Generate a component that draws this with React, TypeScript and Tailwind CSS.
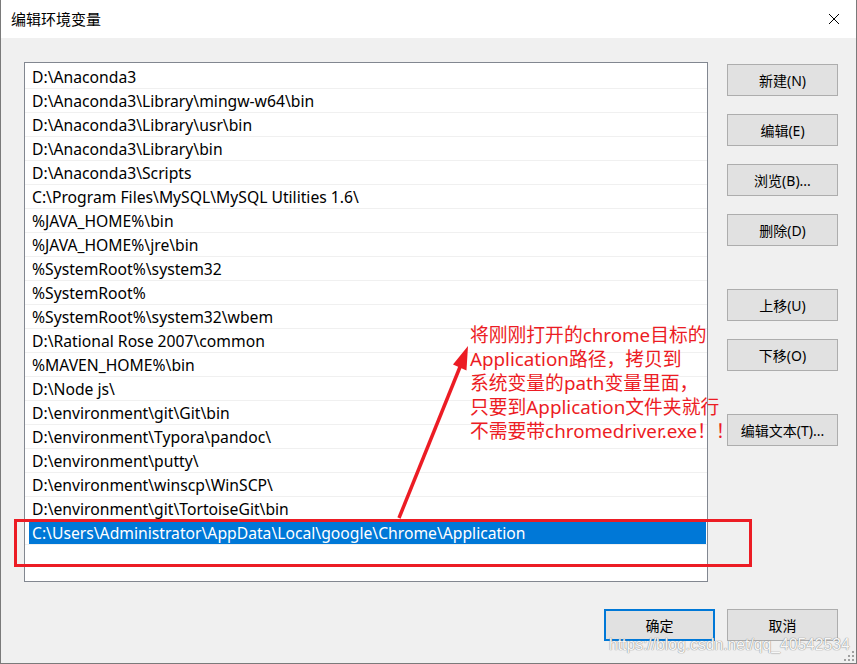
import React from "react";

const paths = [
  "D:\\Anaconda3",
  "D:\\Anaconda3\\Library\\mingw-w64\\bin",
  "D:\\Anaconda3\\Library\\usr\\bin",
  "D:\\Anaconda3\\Library\\bin",
  "D:\\Anaconda3\\Scripts",
  "C:\\Program Files\\MySQL\\MySQL Utilities 1.6\\",
  "%JAVA_HOME%\\bin",
  "%JAVA_HOME%\\jre\\bin",
  "%SystemRoot%\\system32",
  "%SystemRoot%",
  "%SystemRoot%\\system32\\wbem",
  "D:\\Rational Rose 2007\\common",
  "%MAVEN_HOME%\\bin",
  "D:\\Node js\\",
  "D:\\environment\\git\\Git\\bin",
  "D:\\environment\\Typora\\pandoc\\",
  "D:\\environment\\putty\\",
  "D:\\environment\\winscp\\WinSCP\\",
  "D:\\environment\\git\\TortoiseGit\\bin",
  "C:\\Users\\Administrator\\AppData\\Local\\google\\Chrome\\Application",
];

const selectedIndex = 19;

const uiFont = "font-['Segoe_UI','Noto_Sans','Noto_Sans_CJK_SC',sans-serif]";
const cjkFont = "font-['Noto_Sans','Noto_Sans_CJK_SC',sans-serif]";

function WinButton({ label, primary = false }: { label: string; primary?: boolean }) {
  return (
    <button
      type="button"
      className={`flex h-[32px] w-[111px] items-center justify-center bg-[#e1e1e1] text-[14px] text-black ${cjkFont} ${
        primary ? "border-2 border-[#0078d7]" : "border border-[#adadad]"
      }`}
    >
      {label}
    </button>
  );
}

function CloseIcon() {
  return (
    <svg width="12" height="12" viewBox="0 0 12 12" className="block">
      <path d="M1 1 L11 11 M11 1 L1 11" stroke="#000" strokeWidth="1" fill="none" />
    </svg>
  );
}

function ResizeGrip() {
  const dots = [
    [10, 2],
    [6, 6],
    [10, 6],
    [2, 10],
    [6, 10],
    [10, 10],
  ];
  return (
    <svg width="13" height="13" viewBox="0 0 13 13" className="absolute bottom-[1px] right-[1px]">
      {dots.map(([x, y]) => (
        <rect key={`${x}-${y}`} x={x} y={y} width="2" height="2" fill="#a0a0a0" />
      ))}
    </svg>
  );
}

export default function App() {
  return (
    <div className={`relative flex h-[664px] w-[857px] flex-col overflow-hidden border-x border-b border-[#7a7a7a] bg-[#f0f0f0] ${cjkFont}`}>
      {/* title bar */}
      <div className="flex h-[38px] shrink-0 items-center justify-between bg-white pl-[10px] pr-[16px]">
        <span className="text-[15px] text-black">编辑环境变量</span>
        <CloseIcon />
      </div>

      <div className="flex flex-1 flex-col pl-[23px] pr-[18px]">
        <div className="mt-[24px] flex gap-[19px]">
          {/* path list */}
          <div className="h-[520px] w-[684px] border border-[#828790] bg-white pt-[2px]">
            {paths.map((p, i) => (
              <div key={p} className="h-[24px] border-b border-[#f0f0f0] pl-[4px] pr-[1px]">
                <div
                  className={`flex h-[23px] items-center whitespace-nowrap px-[3px] pt-[3px] text-[15.7px] ${uiFont} ${
                    i === selectedIndex ? "bg-[#0078d7] text-white" : "text-black"
                  }`}
                >
                  {p}
                </div>
              </div>
            ))}
          </div>

          {/* side buttons */}
          <div className="mt-[2px] flex flex-col">
            <div className="flex flex-col gap-[18px]">
              <WinButton label="新建(N)" />
              <WinButton label="编辑(E)" />
              <WinButton label="浏览(B)..." />
              <WinButton label="删除(D)" />
            </div>
            <div className="mt-[43px] flex flex-col gap-[18px]">
              <WinButton label="上移(U)" />
              <WinButton label="下移(O)" />
            </div>
            <div className="mt-[43px]">
              <WinButton label="编辑文本(T)..." />
            </div>
          </div>
        </div>

        <div className="mt-[27px] flex justify-end gap-[12px]">
          <WinButton label="确定" primary />
          <WinButton label="取消" />
        </div>
      </div>

      {/* annotation: highlight box, arrow and note */}
      <div className="pointer-events-none absolute left-[13px] top-[519px] h-[48px] w-[738px] border-[3px] border-[#ec1c24]" />
      <svg width="857" height="664" viewBox="0 0 857 664" className="pointer-events-none absolute left-0 top-0">
        <line x1="398" y1="518" x2="461" y2="362" stroke="#ec1c24" strokeWidth="3.5" />
        <polygon points="467,346 465.5,370.5 452,364.5" fill="#ec1c24" />
      </svg>
      <div className="pointer-events-none absolute left-[469px] top-[323px] whitespace-nowrap text-[18.8px] leading-[24px] text-[#ec1c24]">
        <div>将刚刚打开的chrome目标的</div>
        <div>Application路径，拷贝到</div>
        <div>系统变量的path变量里面，</div>
        <div>只要到Application文件夹就行</div>
        <div>不需要带chromedriver.exe！！</div>
      </div>

      {/* blog watermark */}
      <div className="pointer-events-none absolute left-[608px] top-[633px] whitespace-nowrap font-['Liberation_Sans',sans-serif] text-[15.7px] text-white/95 [text-shadow:0_0_1px_#8a8a8a,0_0_1px_#8a8a8a]">
        https://blog.csdn.net/qq_40542534
      </div>

      <ResizeGrip />
    </div>
  );
}
